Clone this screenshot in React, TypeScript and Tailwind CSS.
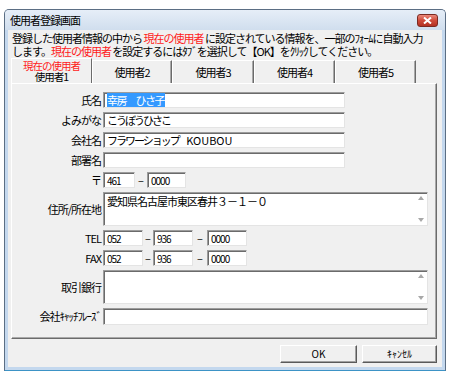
import React from "react";

const inputBox =
  "bg-white border border-[#9c9c9c] border-r-[#e4e4e4] border-b-[#e4e4e4] shadow-[inset_1px_1px_0_#6b6b6b] pl-[3px] text-[11px] leading-[14px] tracking-[-1px] whitespace-nowrap overflow-hidden";

function Field({ w, h = 16, children }: { w: number; h?: number; children?: React.ReactNode }) {
  return (
    <div className={inputBox} style={{ width: w, height: h }}>
      {children}
    </div>
  );
}

function Row({ label, children, h = 16 }: { label: React.ReactNode; children: React.ReactNode; h?: number }) {
  return (
    <div className="flex items-center" style={{ height: h }}>
      <div className="w-[89px] text-right tracking-[-1px] leading-[13px] whitespace-nowrap">{label}</div>
      <div className="ml-[2px] flex items-center">{children}</div>
    </div>
  );
}

function Dash({ w }: { w: number }) {
  return (
    <span className="text-center text-[11px] leading-[13px]" style={{ width: w }}>
      –
    </span>
  );
}

function TextArea({ children }: { children?: React.ReactNode }) {
  return (
    <div className="w-[325px] h-[34px] flex bg-white border border-[#9c9c9c] border-r-[#e4e4e4] border-b-[#e4e4e4] shadow-[inset_1px_1px_0_#6b6b6b]">
      <div className="flex-1 pl-[3px] pt-[1px] text-[11px] leading-[14px] tracking-[-1px] whitespace-nowrap">{children}</div>
      <div className="w-[12px] flex flex-col justify-between items-center py-[3px] text-[#a8a8a8]">
        <svg width="6" height="4" viewBox="0 0 6 4">
          <path d="M3 0 L6 4 L0 4 Z" fill="currentColor" />
        </svg>
        <svg width="6" height="4" viewBox="0 0 6 4">
          <path d="M0 0 L6 0 L3 4 Z" fill="currentColor" />
        </svg>
      </div>
    </div>
  );
}

function Tab({ w, selected, children }: { w: number; selected?: boolean; children: React.ReactNode }) {
  if (selected) {
    return (
      <div
        className="h-[25px] flex flex-col items-center justify-center border-l border-t border-white border-r border-r-[#6b6b6b] bg-[#f0f0f0] text-[10.5px] leading-[11px] tracking-[-1px] z-10 -mb-px"
        style={{ width: w }}
      >
        {children}
      </div>
    );
  }
  return (
    <div
      className="h-[23px] mt-[2px] flex items-center justify-center border-l border-t border-white border-r border-r-[#6b6b6b] shadow-[inset_-1px_0_0_#a9a9a9] tracking-[-1px] leading-[13px]"
      style={{ width: w }}
    >
      {children}
    </div>
  );
}

function Button({ w, children }: { w: number; children: React.ReactNode }) {
  return (
    <div
      className="h-[18px] flex items-center justify-center bg-[#f0f0f0] border border-white border-r-[#5a5a5a] border-b-[#5a5a5a] shadow-[inset_-1px_-1px_0_#a0a0a0] text-[10px] leading-[12px]"
      style={{ width: w }}
    >
      {children}
    </div>
  );
}

export default function App() {
  const red = "inline-block leading-[13px] text-[#ff1a1a]";
  return (
    <div className="w-[453px] h-[379px] bg-white pt-[9px] pl-[4px] font-['Noto_Sans_CJK_JP',sans-serif] text-[11px] text-black">
      <div className="w-[442px] h-[362px] flex flex-col rounded-t-[5px] border border-[#5b6e84] border-b-[#3d93c6] bg-[#c4d8ee]">
        {/* title bar */}
        <div className="h-[20px] flex items-center justify-between pl-[5px] pr-[7px] rounded-t-[4px] bg-gradient-to-b from-[#e6eef8] to-[#d0deee]">
          <span className="text-[11px] leading-[13px] tracking-[-1px]">使用者登録画面</span>
          <div className="w-[21px] h-[13px] flex items-center justify-center rounded-[3px] border border-[#7b2a22] bg-gradient-to-b from-[#e9877a] via-[#cf4a3a] to-[#b33223]">
            <svg width="9" height="7" viewBox="0 0 9 7">
              <path d="M1 0.5 L8 6.5 M8 0.5 L1 6.5" stroke="white" strokeWidth="2" />
            </svg>
          </div>
        </div>

        {/* body */}
        <div className="flex-1 mx-[3px] mb-[3px] bg-[#f0f0f0] pl-[3px] pr-[5px] pt-[2px] flex flex-col">
          <div className="pl-[1px] tracking-[-1px] whitespace-nowrap">
            <div className="h-[13px] leading-[13px] flex">
              <span className="inline-block">登録した使用者情報の中から&nbsp;</span>
              <span className={red}>現在の使用者</span>
              <span className="inline-block">&nbsp;に設定されている情報を、一部のﾌｫｰﾑに自動入力</span>
            </div>
            <div className="h-[13px] leading-[13px] flex">
              <span className="inline-block">します。</span>
              <span className={red}>現在の使用者</span>
              <span className="inline-block">&nbsp;を設定するにはﾀﾌﾞを選択して【OK】をｸﾘｯｸしてください。</span>
            </div>
          </div>

          {/* tabs */}
          <div className="flex h-[25px]">
            <Tab w={81} selected>
              <span className="h-[11px] text-[#ff1a1a]">現在の使用者</span>
              <span className="h-[11px]">使用者1</span>
            </Tab>
            <Tab w={80}>使用者2</Tab>
            <Tab w={82}>使用者3</Tab>
            <Tab w={81}>使用者4</Tab>
            <Tab w={81}>使用者5</Tab>
          </div>

          {/* panel */}
          <div className="h-[256px] border border-white border-r-[#6b6b6b] border-b-[#6b6b6b] shadow-[inset_-1px_-1px_0_#a9a9a9] pt-[8px] flex flex-col gap-[4px]">
            <Row label="氏名">
              <Field w={242}>
                <span className="bg-[#3399ff] text-white pr-[1px] tracking-[-1.5px]">幸房　ひさ子</span>
              </Field>
            </Row>
            <Row label="よみがな">
              <Field w={242}>
                <span className="tracking-[-2px]">こうぼうひさこ</span>
              </Field>
            </Row>
            <Row label="会社名">
              <Field w={242}>
                <span className="tracking-[-2px]">フラワーショップ</span>
                <span className="tracking-[0px]">&nbsp;&nbsp;&nbsp;KOUBOU</span>
              </Field>
            </Row>
            <Row label="部署名">
              <Field w={242} />
            </Row>
            <Row label="〒">
              <Field w={32}>
                <span className="text-[10px]">461</span>
              </Field>
              <Dash w={12} />
              <Field w={39}>
                <span className="text-[10px]">0000</span>
              </Field>
            </Row>
            <Row label="住所/所在地" h={34}>
              <TextArea>愛知県名古屋市東区春井３－１－０</TextArea>
            </Row>
            <Row label="TEL">
              <Field w={40}>
                <span className="text-[10px]">052</span>
              </Field>
              <Dash w={10} />
              <Field w={40}>
                <span className="text-[10px]">936</span>
              </Field>
              <Dash w={14} />
              <Field w={40}>
                <span className="text-[10px]">0000</span>
              </Field>
            </Row>
            <Row label="FAX">
              <Field w={40}>
                <span className="text-[10px]">052</span>
              </Field>
              <Dash w={10} />
              <Field w={40}>
                <span className="text-[10px]">936</span>
              </Field>
              <Dash w={14} />
              <Field w={40}>
                <span className="text-[10px]">0000</span>
              </Field>
            </Row>
            <Row label="取引銀行" h={34}>
              <TextArea />
            </Row>
            <Row label="会社ｷｬｯﾁﾌﾚｰｽﾞ" h={17}>
              <Field w={325} h={17} />
            </Row>
          </div>

          {/* buttons */}
          <div className="mt-[6px] flex justify-end gap-[5px]">
            <Button w={77}>OK</Button>
            <Button w={75}>ｷｬﾝｾﾙ</Button>
          </div>
        </div>
      </div>
    </div>
  );
}
